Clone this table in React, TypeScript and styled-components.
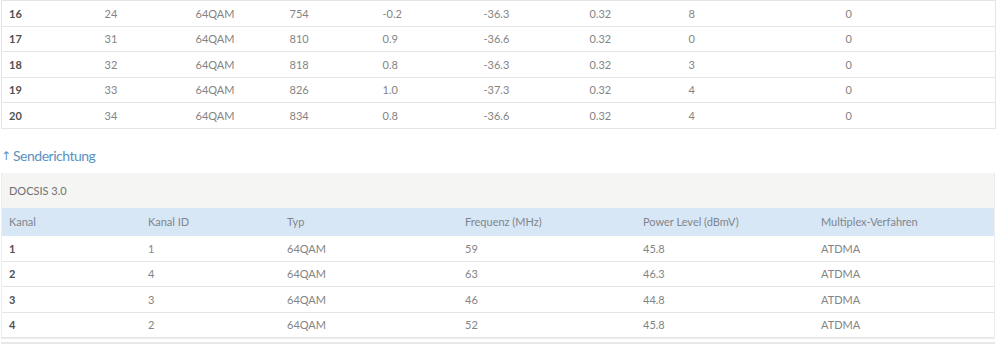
import React from "react";
import styled, { createGlobalStyle } from "styled-components";

const Global = createGlobalStyle`
  html, body { margin: 0; padding: 0; background: #fff; }
  body { font-family: Lato, "Open Sans", "Liberation Sans", sans-serif; font-size: 11px; color: #808080; }
`;

const Page = styled.div`
  width: 999px;
  padding: 0 4px 0 1px;
  box-sizing: border-box;
`;

const Table = styled.table`
  width: 994px;
  border-collapse: collapse;
  table-layout: fixed;
  border: 1px solid #e4e4e4;
`;

const Row = styled.tr<{ $h?: number }>`
  height: ${(p) => p.$h ?? 25.5}px;
  border-bottom: 1px solid #e6e6e6;
`;

const Cell = styled.td<{ $bold?: boolean }>`
  padding: 0 0 0 7px;
  font-size: 11px;
  color: ${(p) => (p.$bold ? "#505050" : "#848484")};
  font-weight: ${(p) => (p.$bold ? 700 : 400)};
  white-space: nowrap;
  vertical-align: middle;
`;

const Heading = styled.h3`
  margin: 0;
  height: 44px;
  box-sizing: border-box;
  padding: 10px 0 0 0;
  display: flex;
  align-items: center;
  font-size: 14px;
  letter-spacing: -0.5px;
  font-weight: 400;
  color: #5b92bf;
`;

const Arrow = styled.span`
  font-family: "DejaVu Sans", sans-serif;
  font-size: 12px;
  letter-spacing: 0;
  margin-right: 2px;
`;

const Panel = styled.div`
  width: 994px;
  border: 1px solid #ececec;
  border-top: none;
  box-sizing: border-box;
`;

const Caption = styled.div`
  height: 35px;
  background: #f5f5f3;
  display: flex;
  align-items: center;
  padding-left: 7px;
  color: #707070;
  font-size: 11px;
`;

const HeadRow = styled.tr`
  height: 28px;
  background: #d8e7f5;
`;

const HeadCell = styled.th`
  padding: 0 0 0 7px;
  text-align: left;
  font-weight: 400;
  font-size: 11px;
  color: #80858c;
  white-space: nowrap;
`;

const InnerTable = styled.table`
  width: 100%;
  border-collapse: collapse;
  table-layout: fixed;
`;

const Divider = styled.div`
  height: 2px;
  margin-top: 3px;
  background: #e8e8e8;
`;

const topCols = [96, 91, 94, 93, 101, 106, 99, 157, 157];
const topRows = [
  ["16", "24", "64QAM", "754", "-0.2", "-36.3", "0.32", "8", "0"],
  ["17", "31", "64QAM", "810", "0.9", "-36.6", "0.32", "0", "0"],
  ["18", "32", "64QAM", "818", "0.8", "-36.3", "0.32", "3", "0"],
  ["19", "33", "64QAM", "826", "1.0", "-37.3", "0.32", "4", "0"],
  ["20", "34", "64QAM", "834", "0.8", "-36.6", "0.32", "4", "0"],
];

const upCols = [139, 139, 178, 178, 178, 180];
const upHead = ["Kanal", "Kanal ID", "Typ", "Frequenz (MHz)", "Power Level (dBmV)", "Multiplex-Verfahren"];
const upRows = [
  ["1", "1", "64QAM", "59", "45.8", "ATDMA"],
  ["2", "4", "64QAM", "63", "46.3", "ATDMA"],
  ["3", "3", "64QAM", "46", "44.8", "ATDMA"],
  ["4", "2", "64QAM", "52", "45.8", "ATDMA"],
];

export default function App() {
  return (
    <Page>
      <Global />
      <Table>
        <colgroup>
          {topCols.map((w, i) => (
            <col key={i} style={{ width: w }} />
          ))}
        </colgroup>
        <tbody>
          {topRows.map((r) => (
            <Row key={r[0]}>
              {r.map((v, i) => (
                <Cell key={i} $bold={i === 0}>
                  {v}
                </Cell>
              ))}
            </Row>
          ))}
        </tbody>
      </Table>
      <Heading>
        <Arrow>↑</Arrow>Senderichtung
      </Heading>
      <Panel>
        <Caption>DOCSIS 3.0</Caption>
        <InnerTable>
          <colgroup>
            {upCols.map((w, i) => (
              <col key={i} style={{ width: w }} />
            ))}
          </colgroup>
          <thead>
            <HeadRow>
              {upHead.map((h) => (
                <HeadCell key={h}>{h}</HeadCell>
              ))}
            </HeadRow>
          </thead>
          <tbody>
            {upRows.map((r) => (
              <Row key={r[0]}>
                {r.map((v, i) => (
                  <Cell key={i} $bold={i === 0}>
                    {v}
                  </Cell>
                ))}
              </Row>
            ))}
          </tbody>
        </InnerTable>
      </Panel>
      <Divider />
    </Page>
  );
}
